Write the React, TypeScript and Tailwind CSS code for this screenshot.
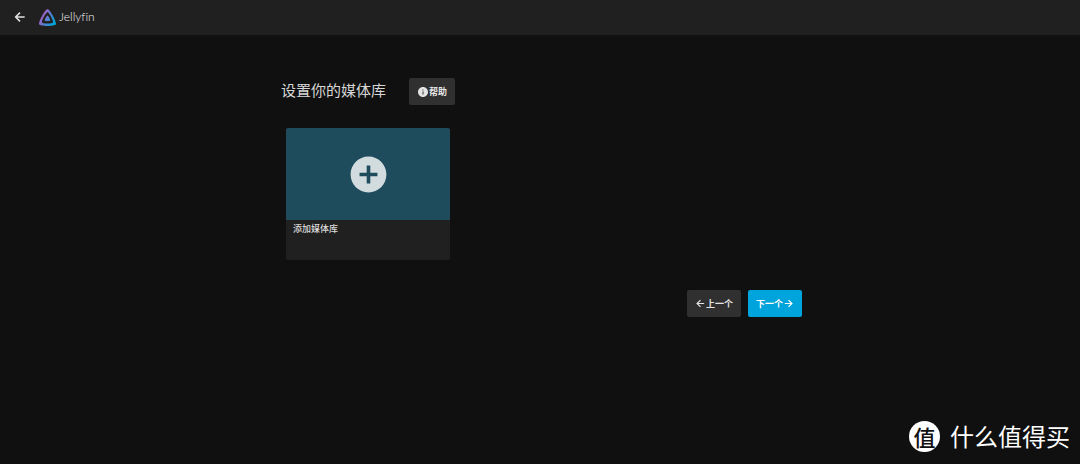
import React from 'react';
import { MdAddCircle, MdInfo } from 'react-icons/md';

interface ArrowProps {
  size: number;
  forward?: boolean;
}

const Arrow: React.FC<ArrowProps> = ({ size, forward }) => (
  <svg
    viewBox="0 0 24 24"
    width={size}
    height={size}
    fill="none"
    stroke="currentColor"
    strokeWidth={2.6}
    aria-hidden="true"
  >
    <path d={forward ? 'M4 12h15M12 4.5l7.5 7.5-7.5 7.5' : 'M20 12H5M12 4.5L4.500 12l7.500 7.500'} />
  </svg>
);

const JellyfinLogo: React.FC = () => (
  <div className="flex items-center gap-[3px]">
    <svg viewBox="0 0 24 24" className="h-[17px] w-[17px]" aria-hidden="true">
      <defs>
        <linearGradient id="jellyfin" x1="3" y1="9" x2="21" y2="20" gradientUnits="userSpaceOnUse">
          <stop offset="0" stopColor="#aa5cc3" />
          <stop offset="1" stopColor="#00a4dc" />
        </linearGradient>
      </defs>
      <path
        fill="url(#jellyfin)"
        d="M12 .002C8.826.002-1.398 18.537.16 21.666c1.56 3.129 22.14 3.094 23.682 0C25.384 18.573 15.177 0 12 0zm7.76 18.949c-1.008 2.028-14.493 2.05-15.514 0C3.224 16.9 9.92 4.755 12.003 4.755c2.081 0 8.77 12.166 7.759 14.196zM12 9.198c-1.054 0-4.446 6.15-3.93 7.189.518 1.04 7.348 1.027 7.86 0 .511-1.027-2.874-7.19-3.93-7.19z"
      />
    </svg>
    <span className="font-['Lato','Noto_Sans',sans-serif] text-xs font-light leading-4 text-[#f0f0f0] [font-variant-ligatures:none]">
      Jellyfin
    </span>
  </div>
);

const Header: React.FC = () => (
  <header className="flex h-[35px] items-center gap-3 bg-[#202020] px-[13px] pb-px">
    <button type="button" aria-label="返回" className="text-[#e0e0e0]">
      <Arrow size={14} />
    </button>
    <JellyfinLogo />
  </header>
);

interface WizardButtonProps {
  primary?: boolean;
  className?: string;
  children: React.ReactNode;
}

const WizardButton: React.FC<WizardButtonProps> = ({ primary, className = '', children }) => (
  <button
    type="button"
    className={`flex h-[27px] items-center justify-center rounded-xs text-[9px] font-bold leading-3
      ${primary ? 'bg-[#00a4dc] text-white' : 'bg-[#303030] text-[#e4e4e4]'} ${className}`}
  >
    {children}
  </button>
);

const AddLibraryCard: React.FC = () => (
  <button type="button" className="ml-2 mt-[23px] block w-[164px] overflow-hidden rounded-xs bg-[#202020] text-left">
    <span className="flex h-[92px] items-center justify-center bg-[#1e4c5c] text-[#d2dbde]">
      <MdAddCircle size={43} />
    </span>
    <span className="block h-10 px-[7px] pt-[3px] text-[9px] font-medium leading-3 text-[#dcdcdc]">添加媒体库</span>
  </button>
);

const Watermark: React.FC = () => (
  <div className="absolute bottom-3 right-2.5 flex items-center gap-2.5 text-white">
    <span className="flex h-[31px] w-[31px] items-center justify-center rounded-full bg-white text-[22px] font-medium leading-8 text-[#111111]">
      值
    </span>
    <span className="text-2xl leading-8">什么值得买</span>
  </div>
);

export default function App() {
  return (
    <div className="relative min-h-screen bg-[#101010] font-['Noto_Sans_CJK_SC',sans-serif]">
      <Header />
      <main className="mx-auto max-w-[524px] pt-[43px]">
        <div className="flex items-start gap-[23px] pl-[3px]">
          <h1 className="text-[15px] leading-6 text-[#d6d6d6]">设置你的媒体库</h1>
          <WizardButton className="w-[46px]">
            <MdInfo size={12} />
            <span>帮助</span>
          </WizardButton>
        </div>
        <AddLibraryCard />
        <div className="mt-[30px] flex justify-end gap-[7px]">
          <WizardButton className="w-[54px]">
            <Arrow size={11} />
            <span>上一个</span>
          </WizardButton>
          <WizardButton primary className="w-[54px]">
            <span>下一个</span>
            <Arrow size={11} forward />
          </WizardButton>
        </div>
      </main>
      <Watermark />
    </div>
  );
}
